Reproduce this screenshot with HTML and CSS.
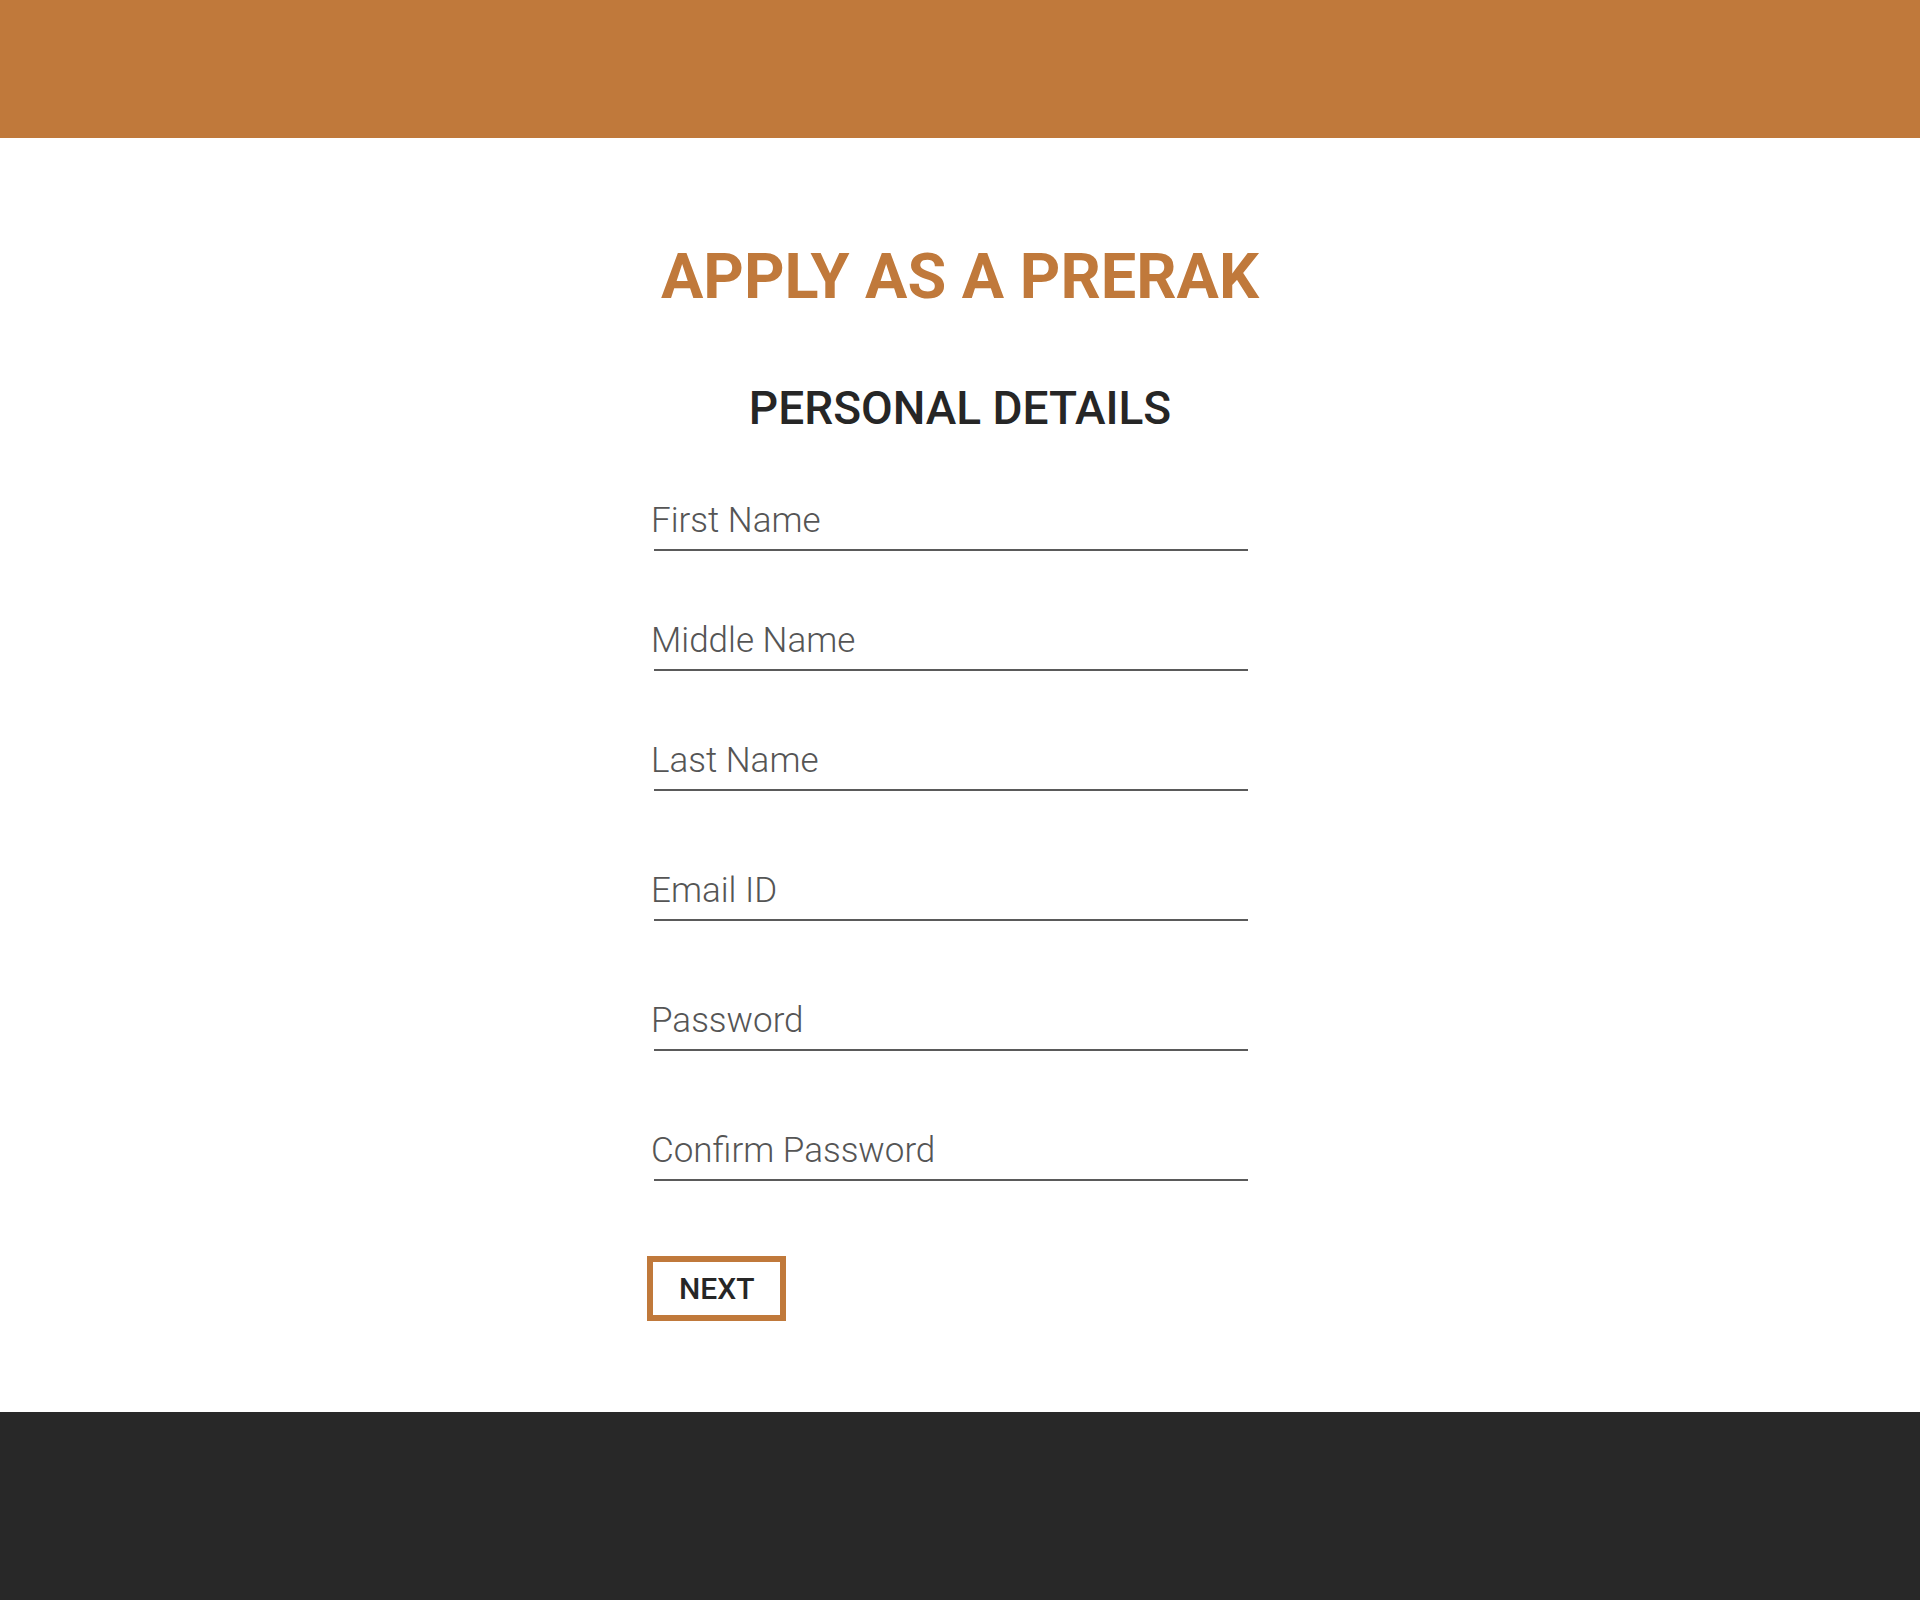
FILE: index.html
```html
<!DOCTYPE html>
<html lang="en">
<head>
<meta charset="utf-8">
<title>Apply as a Prerak</title>
<link rel="stylesheet" href="styles.css">
</head>
<body>
<header class="topbar"></header>
<main class="main">
  <h1 class="title">APPLY AS A PRERAK</h1>
  <h2 class="subtitle">PERSONAL DETAILS</h2>
  <form class="form">
    <label class="field">First Name</label>
    <label class="field">Middle Name</label>
    <label class="field">Last Name</label>
    <label class="field field--wide">Email ID</label>
    <label class="field field--wide">Password</label>
    <label class="field field--wide">Confirm Password</label>
    <button type="button" class="next">NEXT</button>
  </form>
</main>
<footer class="footer"></footer>
</body>
</html>
```
FILE: styles.css
```css
html, body {
  margin: 0;
  padding: 0;
  background: #ffffff;
}
body {
  font-family: Roboto, "Liberation Sans", Arial, sans-serif;
}
.topbar {
  height: 138px;
  background: #c0793b;
}
.main {
  padding: 107px 0 91px;
  display: flex;
  flex-direction: column;
  align-items: center;
}
.title {
  margin: 0;
  font-size: 63px;
  line-height: 64px;
  font-weight: 700;
  color: #c0793b;
}
.subtitle {
  margin: 76px 0 0;
  font-size: 46px;
  line-height: 46px;
  font-weight: 500;
  color: #262626;
}
.form {
  width: 626px;
  margin-top: 69px;
  display: flex;
  flex-direction: column;
  align-items: flex-start;
}
.field {
  display: block;
  box-sizing: border-box;
  width: 594px;
  margin-left: 7px;
  padding-top: 1px;
  padding-bottom: 8px;
  border-bottom: 2px solid #5a5a5a;
  font-size: 35px;
  line-height: 40px;
  font-weight: 300;
  text-indent: -3px;
  color: #555555;
}
.field + .field {
  margin-top: 69px;
}
.field + .field--wide {
  margin-top: 79px;
}
.next {
  margin-top: 75px;
  padding: 8px 26px;
  border: 6px solid #c0793b;
  background: #ffffff;
  font-family: Roboto, "Liberation Sans", Arial, sans-serif;
  font-size: 30px;
  line-height: 37px;
  font-weight: 500;
  color: #262626;
  cursor: pointer;
}
.footer {
  height: 188px;
  background: #282828;
}
```
